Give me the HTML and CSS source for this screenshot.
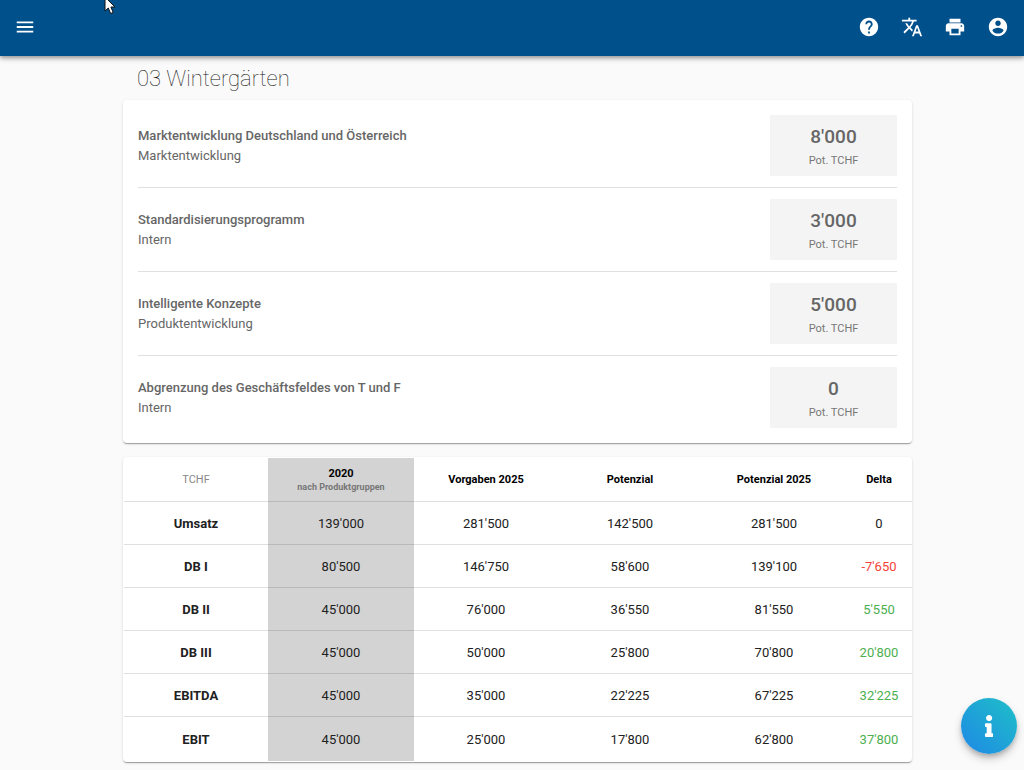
FILE: index.html
```html
<!DOCTYPE html>
<html lang="de">
<head>
<meta charset="utf-8">
<meta name="viewport" content="width=device-width, initial-scale=1">
<title>03 Wintergärten</title>
<link rel="stylesheet" href="styles.css">
</head>
<body>
<header class="topbar">
  <button class="icon-button" type="button" aria-label="Menü"><svg class="icon" viewBox="0 0 24 24"><path d="M3 18h18v-2H3v2zm0-5h18v-2H3v2zm0-7v2h18V6H3z"/></svg></button>
  <nav class="actions" aria-label="Aktionen">
    <button class="icon-button" type="button" aria-label="Hilfe"><svg class="icon" viewBox="0 0 24 24"><path d="M12 2C6.480 2 2 6.480 2 12s4.480 10 10 10 10-4.480 10-10S17.520 2 12 2zm1 17h-2v-2h2v2zm2.070-7.750l-.9.920C13.450 12.900 13 13.500 13 15h-2v-.5c0-1.100.45-2.100 1.170-2.830l1.240-1.260c.37-.36.59-.86.59-1.410 0-1.100-.9-2-2-2s-2 .9-2 2H8c0-2.210 1.790-4 4-4s4 1.790 4 4c0 .88-.36 1.680-.93 2.250z"/></svg></button>
    <button class="icon-button" type="button" aria-label="Sprache"><svg class="icon" viewBox="0 0 24 24"><path d="M12.870 15.070l-2.540-2.510.03-.03c1.740-1.940 2.980-4.170 3.710-6.530H17V4h-7V2H8v2H1v1.990h11.170C11.500 7.920 10.440 9.750 9 11.350 8.070 10.320 7.300 9.190 6.690 8h-2c.73 1.630 1.730 3.170 2.980 4.560l-5.090 5.020L4 19l5-5 3.110 3.110.76-2.040zM18.500 10h-2L12 22h2l1.120-3h4.750L21 22h2l-4.500-12zm-2.620 7l1.620-4.330L19.120 17h-3.240z"/></svg></button>
    <button class="icon-button" type="button" aria-label="Drucken"><svg class="icon" viewBox="0 0 24 24"><path d="M19 8H5c-1.660 0-3 1.340-3 3v6h4v4h12v-4h4v-6c0-1.660-1.340-3-3-3zm-3 11H8v-5h8v5zm3-7c-.55 0-1-.45-1-1s.45-1 1-1 1 .45 1 1-.45 1-1 1zm-1-9H6v4h12V3z"/></svg></button>
    <button class="icon-button" type="button" aria-label="Konto"><svg class="icon" viewBox="0 0 24 24"><path d="M12 2C6.480 2 2 6.480 2 12s4.480 10 10 10 10-4.480 10-10S17.520 2 12 2zm0 3c1.660 0 3 1.340 3 3s-1.340 3-3 3-3-1.340-3-3 1.340-3 3-3zm0 14.200c-2.500 0-4.710-1.280-6-3.220.03-1.990 4-3.080 6-3.080 1.990 0 5.970 1.090 6 3.080-1.290 1.940-3.500 3.220-6 3.220z"/></svg></button>
  </nav>
</header>
<svg class="pointer" viewBox="0 0 12 19" aria-hidden="true"><path d="M1 1v14l3.300-3 2.300 5.500 2.600-1.100L6.900 11H11z"/></svg>

<main class="content">
  <h1 class="title">03 Wintergärten</h1>

  <section class="card projects">
    <article class="project">
      <div class="project-text"><h2 class="project-name">Marktentwicklung Deutschland und Österreich</h2><p class="project-kind">Marktentwicklung</p></div>
      <div class="potential"><strong class="potential-value">8'000</strong><span class="potential-unit">Pot. TCHF</span></div>
    </article>
    <article class="project">
      <div class="project-text"><h2 class="project-name">Standardisierungsprogramm</h2><p class="project-kind">Intern</p></div>
      <div class="potential"><strong class="potential-value">3'000</strong><span class="potential-unit">Pot. TCHF</span></div>
    </article>
    <article class="project">
      <div class="project-text"><h2 class="project-name">Intelligente Konzepte</h2><p class="project-kind">Produktentwicklung</p></div>
      <div class="potential"><strong class="potential-value">5'000</strong><span class="potential-unit">Pot. TCHF</span></div>
    </article>
    <article class="project">
      <div class="project-text"><h2 class="project-name">Abgrenzung des Geschäftsfeldes von T und F</h2><p class="project-kind">Intern</p></div>
      <div class="potential"><strong class="potential-value">0</strong><span class="potential-unit">Pot. TCHF</span></div>
    </article>
  </section>

  <section class="card figures">
    <table class="table">
      <colgroup><col class="col"><col class="col col-base"><col class="col"><col class="col"><col class="col"><col class="col-delta"></colgroup>
      <thead>
        <tr><th class="unit" scope="col">TCHF</th><th class="base" scope="col">2020<span class="subhead">nach Produktgruppen</span></th><th scope="col">Vorgaben 2025</th><th scope="col">Potenzial</th><th scope="col">Potenzial 2025</th><th scope="col">Delta</th></tr>
      </thead>
      <tbody>
        <tr><th scope="row">Umsatz</th><td class="base">139'000</td><td>281'500</td><td>142'500</td><td>281'500</td><td>0</td></tr>
        <tr><th scope="row">DB I</th><td class="base">80'500</td><td>146'750</td><td>58'600</td><td>139'100</td><td class="negative">-7'650</td></tr>
        <tr><th scope="row">DB II</th><td class="base">45'000</td><td>76'000</td><td>36'550</td><td>81'550</td><td class="positive">5'550</td></tr>
        <tr><th scope="row">DB III</th><td class="base">45'000</td><td>50'000</td><td>25'800</td><td>70'800</td><td class="positive">20'800</td></tr>
        <tr><th scope="row">EBITDA</th><td class="base">45'000</td><td>35'000</td><td>22'225</td><td>67'225</td><td class="positive">32'225</td></tr>
        <tr><th scope="row">EBIT</th><td class="base">45'000</td><td>25'000</td><td>17'800</td><td>62'800</td><td class="positive">37'800</td></tr>
      </tbody>
    </table>
  </section>
</main>

<button class="info" type="button" aria-label="Information"><svg class="info-icon" viewBox="0 0 192 512"><path d="M20 424.229h20V279.771H20c-11.046 0-20-8.954-20-20V212c0-11.046 8.954-20 20-20h112c11.046 0 20 8.954 20 20v212.229h20c11.046 0 20 8.954 20 20V492c0 11.046-8.954 20-20 20H20c-11.046 0-20-8.954-20-20v-47.771c0-11.046 8.954-20 20-20zM96 0C56.235 0 24 32.235 24 72s32.235 72 72 72 72-32.235 72-72S135.764 0 96 0z"/></svg></button>
</body>
</html>
```
FILE: styles.css
```css
* {
  box-sizing: border-box;
}

body {
  margin: 0;
  background: #fafafa;
  color: #212121;
  font-family: Roboto, "Liberation Sans", sans-serif;
  font-size: 13px;
}

h1, h2, p {
  margin: 0;
}

button {
  border: 0;
  padding: 0;
  cursor: pointer;
}

.topbar {
  display: flex;
  align-items: center;
  justify-content: space-between;
  height: 56px;
  padding: 0 15px 2px 14px;
  background: #00508c;
  box-shadow: 0 2px 4px rgba(0, 0, 0, .3), 0 1px 8px rgba(0, 0, 0, .2);
}

.actions {
  display: flex;
  gap: 21px;
}

.icon-button {
  display: flex;
  background: none;
  color: #fff;
}

.icon {
  width: 22px;
  height: 22px;
  fill: currentColor;
}

.pointer {
  position: absolute;
  top: -4px;
  left: 104px;
  width: 12px;
  height: 19px;
  fill: #fff;
  stroke: #111;
}

.content {
  padding: 8px 112px 8px 123px;
}

.title {
  padding: 0 14px;
  color: #111;
  font-size: 22px;
  font-weight: 100;
  line-height: 30px;
}

.card {
  background: #fff;
  border-radius: 4px;
  box-shadow: 0 2px 1px -1px rgba(0, 0, 0, .2), 0 1px 1px rgba(0, 0, 0, .14), 0 1px 3px rgba(0, 0, 0, .12);
}

.projects {
  margin-top: 6px;
  padding: 4px 15px;
}

.project {
  display: flex;
  align-items: center;
  justify-content: space-between;
  padding: 11px 0;
  color: #666;
}

.project + .project {
  border-top: 1px solid #e0e0e0;
}

.project-name {
  font-size: 13px;
  font-weight: 500;
  line-height: 20px;
}

.project-kind {
  line-height: 20px;
}

.potential {
  display: flex;
  flex-direction: column;
  align-items: center;
  width: 127px;
  padding: 10px 0 4px;
  background: #f4f4f4;
}

.potential-value {
  font-size: 19px;
  font-weight: 500;
  line-height: 24px;
}

.potential-unit {
  color: #777;
  font-size: 11px;
  line-height: 23px;
}

.figures {
  margin-top: 14px;
  padding: 1px;
}

.table {
  width: 100%;
  table-layout: fixed;
  border-collapse: separate;
  border-spacing: 0;
  text-align: center;
}

.col {
  width: 144px;
}

.col-base {
  width: 146px;
}

.col-delta {
  width: 66px;
}

.table th,
.table td {
  height: 43px;
  padding: 0;
  border-bottom: 1px solid rgba(0, 0, 0, .12);
}

.table thead th {
  height: 44px;
  color: #000;
  font-size: 11px;
  font-weight: 700;
}

.table thead .unit {
  color: #888;
  font-weight: 400;
}

.table tbody tr:last-child > * {
  height: 44px;
  border-bottom: 0;
}

.table .base {
  background: #d3d3d3;
}

.table .negative {
  color: #f44336;
}

.table .positive {
  color: #4caf50;
}

.subhead {
  display: block;
  padding-top: 2px;
  color: #777;
  font-size: 9px;
}

.info {
  position: fixed;
  right: 7px;
  bottom: 16px;
  display: flex;
  align-items: center;
  justify-content: center;
  width: 56px;
  height: 56px;
  border-radius: 50%;
  background: linear-gradient(45deg, #1e88e5, #1fc0c8);
  box-shadow: 0 3px 5px -1px rgba(0, 0, 0, .2), 0 5px 9px rgba(0, 0, 0, .2);
}

.info-icon {
  height: 22px;
  fill: #fff;
}
```
